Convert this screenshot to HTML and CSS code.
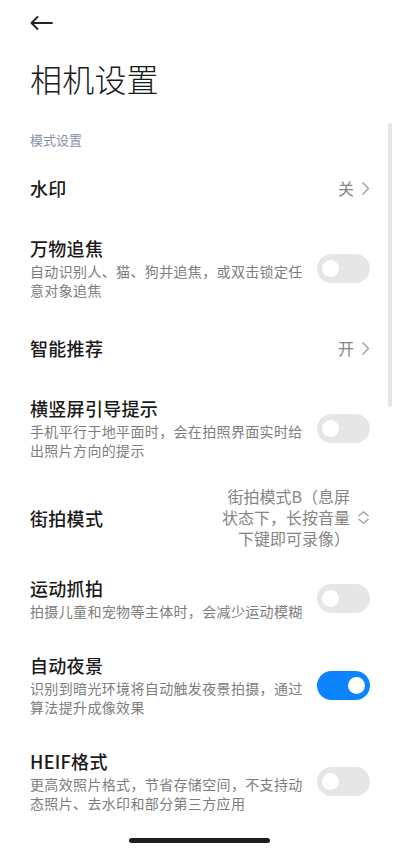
FILE: index.html
```html
<!DOCTYPE html>
<html lang="zh-CN">
<head>
    <meta charset="UTF-8">
    <meta name="viewport" content="width=device-width, initial-scale=1.0">
    <title>相机设置</title>
    <link rel="stylesheet" href="styles.css">
</head>
<body>
    <div class="page">
        <div class="topbar">
            <svg class="back" width="23" height="14" viewBox="0 0 23 14">
                <path d="M22 7H1.5M7.5 1L1.5 7l6 6" fill="none" stroke="#222" stroke-width="1.8" stroke-linecap="round" stroke-linejoin="round"/>
            </svg>
        </div>
        <h1 class="title">相机设置</h1>

        <div class="section-label">模式设置</div>

        <div class="list">
            <div class="row single">
                <div class="row-text"><div class="row-title">水印</div></div>
                <div class="value">关
                    <svg class="chev" width="9" height="15" viewBox="0 0 9 15"><path d="M1.5 1.5l6 6-6 6" fill="none" stroke="#9a9a9a" stroke-width="1.3"/></svg>
                </div>
            </div>

            <div class="row">
                <div class="row-text">
                    <div class="row-title">万物追焦</div>
                    <div class="row-sub">自动识别人、猫、狗并追焦，或双击锁定任意对象追焦</div>
                </div>
                <div class="switch"><span class="knob"></span></div>
            </div>

            <div class="row single">
                <div class="row-text"><div class="row-title">智能推荐</div></div>
                <div class="value">开
                    <svg class="chev" width="9" height="15" viewBox="0 0 9 15"><path d="M1.5 1.5l6 6-6 6" fill="none" stroke="#9a9a9a" stroke-width="1.3"/></svg>
                </div>
            </div>

            <div class="row">
                <div class="row-text">
                    <div class="row-title">横竖屏引导提示</div>
                    <div class="row-sub">手机平行于地平面时，会在拍照界面实时给出照片方向的提示</div>
                </div>
                <div class="switch"><span class="knob"></span></div>
            </div>

            <div class="row street">
                <div class="row-text"><div class="row-title">街拍模式</div></div>
                <div class="value">
                    <div class="value-multi">
                        <div>街拍模式B（息屏</div>
                        <div>状态下，长按音量</div>
                        <div>下键即可录像）</div>
                    </div>
                    <svg class="updown" width="13" height="13" viewBox="0 0 13 13"><path d="M1.5 5l5-4.2 5 4.2M1.5 8l5 4.2 5-4.2" fill="none" stroke="#9a9a9a" stroke-width="1.2"/></svg>
                </div>
            </div>

            <div class="row">
                <div class="row-text">
                    <div class="row-title">运动抓拍</div>
                    <div class="row-sub">拍摄儿童和宠物等主体时，会减少运动模糊</div>
                </div>
                <div class="switch"><span class="knob"></span></div>
            </div>

            <div class="row">
                <div class="row-text">
                    <div class="row-title">自动夜景</div>
                    <div class="row-sub">识别到暗光环境将自动触发夜景拍摄，通过算法提升成像效果</div>
                </div>
                <div class="switch on"><span class="knob"></span></div>
            </div>

            <div class="row">
                <div class="row-text">
                    <div class="row-title">HEIF格式</div>
                    <div class="row-sub">更高效照片格式，节省存储空间，不支持动态照片、去水印和部分第三方应用</div>
                </div>
                <div class="switch"><span class="knob"></span></div>
            </div>
        </div>

        <div class="scrollbar"></div>
        <div class="home-bar"></div>
    </div>
</body>
</html>
```

FILE: styles.css
```css
body {
    margin: 0;
    background: #fff;
    font-family: "Noto Sans CJK SC", "Noto Sans", sans-serif;
    color: #1a1a1a;
}
.page {
    position: relative;
    width: 400px;
    height: 849px;
    overflow: hidden;
    padding: 0 30px;
    box-sizing: border-box;
}
.topbar {
    height: 46px;
    display: flex;
    align-items: center;
}
.back {
    display: block;
}
.title {
    margin: 10px 0 0;
    font-size: 32px;
    line-height: 44px;
    font-weight: 300;
    letter-spacing: 0.2px;
}
.section-label {
    margin-top: 31px;
    margin-bottom: 7px;
    font-size: 13px;
    line-height: 18px;
    color: #8a90aa;
}
.row {
    display: flex;
    align-items: center;
    padding: 16px 0;
}
.row.single {
    min-height: 64px;
    padding: 0;
    box-sizing: border-box;
}
.row.street {
    padding: 10px 0 11px;
}
.row-text {
    flex: 1;
    padding-right: 8px;
}
.row-title {
    font-size: 18px;
    line-height: 24px;
    font-weight: 500;
    letter-spacing: 0.3px;
}
.row-sub {
    margin-top: 2px;
    font-size: 14px;
    line-height: 19px;
    letter-spacing: 0.35px;
    color: #7d7d7d;
}
.value {
    display: flex;
    align-items: center;
    gap: 7px;
    font-size: 16px;
    color: #858585;
}
.chev, .updown {
    display: block;
}
.value-multi {
    text-align: right;
    line-height: 21px;
}
.switch {
    position: relative;
    width: 53px;
    height: 29px;
    border-radius: 15px;
    background: #e6e6e6;
    flex-shrink: 0;
}
.switch .knob {
    position: absolute;
    top: 6px;
    left: 5px;
    width: 17px;
    height: 17px;
    border-radius: 50%;
    background: #fff;
}
.switch.on {
    background: #0d84ff;
}
.switch.on .knob {
    left: auto;
    right: 5px;
}
.scrollbar {
    position: absolute;
    top: 123px;
    left: 388px;
    width: 4px;
    height: 284px;
    border-radius: 2px;
    background: #e6e6e6;
}
.home-bar {
    position: absolute;
    left: 129px;
    top: 838px;
    width: 141px;
    height: 5px;
    border-radius: 3px;
    background: #1e1e1e;
}
```
